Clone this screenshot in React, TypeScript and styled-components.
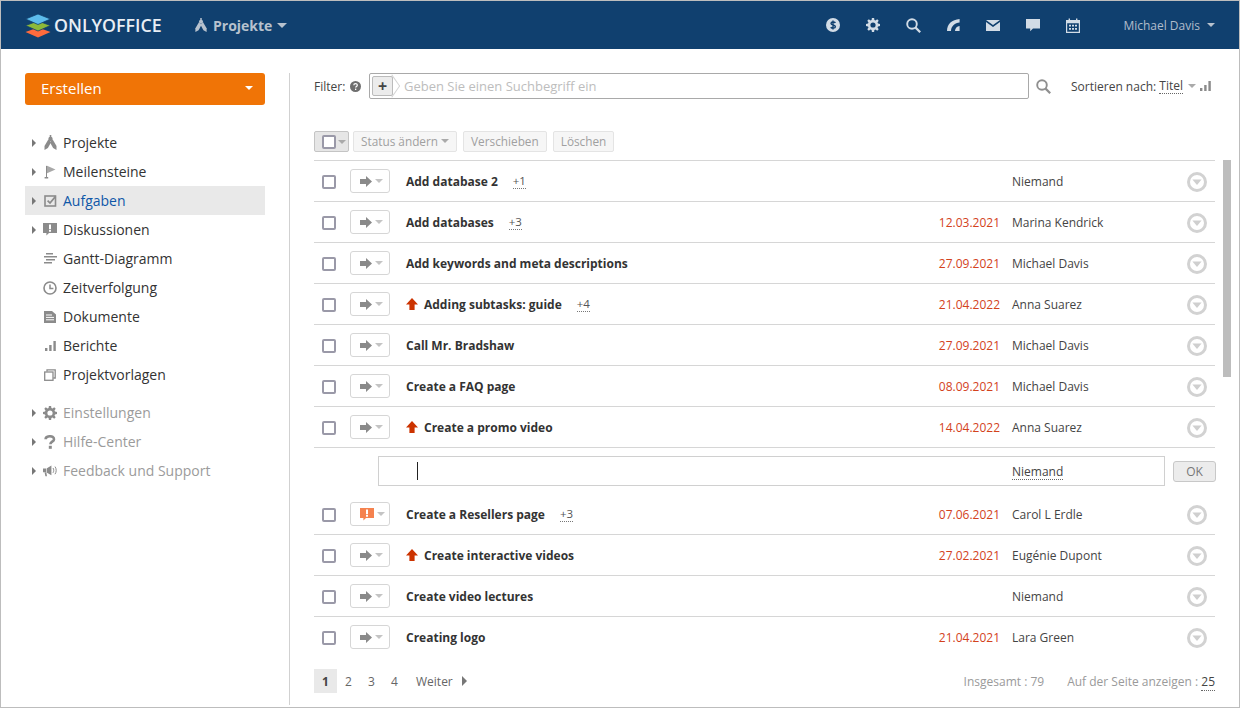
import { ReactNode } from 'react';
import styled, { createGlobalStyle } from 'styled-components';

const GlobalStyle = createGlobalStyle`
  html, body { margin: 0; padding: 0; background: #fff; }
  body { font-family: "Open Sans", "Liberation Sans", sans-serif; color: #333; }
`;

const Frame = styled.div`
  position: relative;
  box-sizing: border-box;
  width: 1240px;
  height: 708px;
  border: 1px solid #bdbdbd;
  overflow: hidden;
`;

const Header = styled.header`
  display: flex;
  align-items: center;
  height: 48px;
  padding-left: 24px;
  padding-right: 24px;
  background: #10406f;
`;

const LogoText = styled.span`
  margin-left: 3px;
  width: 138px;
  font-size: 17.8px;
  font-weight: 600;
  color: #e8eef4;
`;

const ModuleName = styled.span`
  display: flex;
  align-items: center;
  gap: 5px;
  margin-left: 2px;
  font-size: 14px;
  font-weight: 700;
  color: #b7c2ce;
`;

const HeaderIcons = styled.div`
  display: flex;
  align-items: center;
  margin-left: auto;
  gap: 24px;
`;

const HeaderIcon = styled.span`
  display: flex;
  justify-content: center;
  width: 16px;
  color: #d2dce6;
`;

const UserName = styled.span`
  display: flex;
  align-items: center;
  gap: 7px;
  margin-left: 42px;
  font-size: 12px;
  color: #b0bccb;
`;

const Caret = styled.span<{ $color?: string; $size?: number }>`
  display: inline-block;
  width: 0;
  height: 0;
  border-left: ${(p) => p.$size || 4}px solid transparent;
  border-right: ${(p) => p.$size || 4}px solid transparent;
  border-top: ${(p) => p.$size || 4}px solid ${(p) => p.$color || '#b7c2ce'};
`;

const Body = styled.div`
  display: flex;
  padding-top: 24px;
`;

const Sidebar = styled.aside`
  box-sizing: border-box;
  width: 289px;
  height: 632px;
  padding: 0 24px;
  border-right: 1px solid #d1d1d1;
`;

const CreateButton = styled.div`
  display: flex;
  align-items: center;
  justify-content: space-between;
  box-sizing: border-box;
  height: 32px;
  margin-bottom: 23px;
  padding: 0 12px 2px 16px;
  border-radius: 3px;
  background: #f07406;
  font-size: 15px;
  color: #fff;
`;

const NavList = styled.nav<{ $muted?: boolean }>`
  margin-bottom: ${(p) => (p.$muted ? 0 : 9)}px;
`;

const NavRow = styled.div<{ $active?: boolean; $muted?: boolean }>`
  display: flex;
  align-items: center;
  height: 29px;
  font-size: 14px;
  background: ${(p) => (p.$active ? '#e9e9e9' : 'transparent')};
  color: ${(p) => (p.$active ? '#0f57a8' : p.$muted ? '#9b9b9b' : '#333')};
`;

const NavArrow = styled.span<{ $hidden?: boolean }>`
  width: 0;
  height: 0;
  margin-left: 7px;
  border-top: 4px solid transparent;
  border-bottom: 4px solid transparent;
  border-left: 4px solid ${(p) => (p.$hidden ? 'transparent' : '#777')};
`;

const NavIcon = styled.span`
  display: flex;
  justify-content: center;
  width: 16px;
  margin-left: 6px;
  margin-right: 5px;
  color: #8b8b8b;
`;

const Main = styled.main`
  width: 901px;
  margin-left: 24px;
`;

const FilterBar = styled.div`
  display: flex;
  align-items: center;
  height: 26px;
  margin-bottom: 32px;
  font-size: 12px;
  color: #444;
`;

const FilterLabel = styled.span`
  display: flex;
  align-items: center;
  gap: 5px;
  flex: none;
  width: 55px;
`;

const SearchBox = styled.div`
  display: flex;
  align-items: center;
  flex: none;
  box-sizing: border-box;
  width: 660px;
  height: 26px;
  padding-left: 2px;
  border: 1px solid #a9a9a9;
  border-radius: 2px;
`;

const AddTag = styled.span`
  position: relative;
  display: block;
  width: 21px;
  height: 20px;

  &:after {
    content: '';
    position: absolute;
    top: 3px;
    right: -6px;
    width: 13px;
    height: 13px;
    border-top: 1px solid #d4d4d4;
    border-right: 1px solid #d4d4d4;
    transform: rotate(45deg) skew(10deg, 10deg);
    background: #fff;
  }
`;

const TagFace = styled.span`
  position: relative;
  z-index: 1;
  display: flex;
  align-items: center;
  justify-content: center;
  box-sizing: border-box;
  width: 21px;
  height: 20px;
  border: 1px solid #bbb;
  border-radius: 2px;
  background: #ececec;
  font-size: 16px;
  font-weight: 700;
  line-height: 1;
  color: #444;
`;

const Placeholder = styled.span`
  margin-left: 11px;
  font-size: 13px;
  color: #bdbdbd;
`;

const SearchIconWrap = styled.span`
  display: flex;
  flex: none;
  box-sizing: border-box;
  width: 42px;
  padding-left: 7px;
  color: #8f8f8f;
`;

const SortLabel = styled.span`
  display: flex;
  align-items: center;
  white-space: pre;
`;

const SortCaret = styled.span`
  display: flex;
  margin: 0 4px 0 5px;
`;

const SortBars = styled.span`
  display: flex;
  color: #8a8a8a;
`;

const Dotted = styled.span`
  border-bottom: 1px dotted #666;
  line-height: 15px;
`;

const Toolbar = styled.div`
  display: flex;
  align-items: center;
  gap: 6px;
  height: 21px;
  margin-bottom: 8px;
`;

const SelectAll = styled.span`
  display: flex;
  align-items: center;
  gap: 2px;
  box-sizing: border-box;
  width: 35px;
  height: 21px;
  margin-right: -2px;
  padding-left: 7px;
  border: 1px solid #c4c4c4;
  border-radius: 2px;
  background: #e6e6e6;
`;

const ToolButton = styled.span`
  display: flex;
  align-items: center;
  gap: 3px;
  box-sizing: border-box;
  height: 21px;
  padding: 0 7px 1px;
  border: 1px solid #e4e4e4;
  border-radius: 2px;
  background: #f6f6f6;
  font-size: 11.8px;
  color: #a0a0a0;
`;

const Check = styled.span`
  flex: none;
  box-sizing: border-box;
  display: block;
  width: 14px;
  height: 14px;
  border: 2px solid #9a99a8;
  border-radius: 2px;
  background: #fff;
`;

const RowCheck = styled(Check)`
  margin-top: 2px;
`;

const Row = styled.div<{ $noLine?: boolean; $last?: boolean }>`
  display: flex;
  align-items: center;
  height: 41px;
  padding-left: 8px;
  border-top: 1px solid ${(p) => (p.$noLine ? 'transparent' : '#d6d6d6')};
  box-sizing: border-box;
  font-size: 12px;
  ${(p) => (p.$last ? 'margin-bottom: 12px;' : '')}
`;

const StatusButton = styled.span`
  display: flex;
  align-items: center;
  gap: 3px;
  flex: none;
  box-sizing: border-box;
  width: 40px;
  height: 24px;
  margin: 0 16px 0 14px;
  padding-left: 9px;
  border: 1px solid #d6d6d6;
  border-radius: 3px;
`;

const TitleCell = styled.div`
  display: flex;
  align-items: center;
  flex: 1;
  min-width: 0;
`;

const PriorityIcon = styled.span`
  display: flex;
  width: 18px;
`;

const TaskTitle = styled.span`
  font-weight: 700;
  font-size: 12px;
  color: #333;
`;

const SubCount = styled.span`
  margin-left: 15px;
  font-size: 11.5px;
  line-height: 15px;
  color: #555;
  border-bottom: 1px dotted #777;
`;

const DueDate = styled.span`
  width: 90px;
  margin-right: 12px;
  text-align: right;
  font-size: 12px;
  color: #d3421c;
`;

const Person = styled.span`
  width: 175px;
  font-size: 12px;
  color: #444;
`;

const MenuSlot = styled.span`
  display: flex;
  width: 28px;
  margin-top: 2px;
`;

const EditRow = styled.div`
  display: flex;
  align-items: flex-start;
  box-sizing: border-box;
  height: 46px;
  padding-top: 8px;
  padding-left: 64px;
  border-top: 1px solid #d6d6d6;
`;

const EditBox = styled.div`
  display: flex;
  align-items: center;
  flex: none;
  box-sizing: border-box;
  width: 787px;
  height: 30px;
  padding-left: 38px;
  padding-top: 2px;
  border: 1px solid #d0d0d0;
  font-size: 12px;
  color: #444;
`;

const TextCursor = styled.span`
  width: 1px;
  height: 18px;
  margin-right: 594px;
  margin-top: -2px;
  background: #222;
`;

const OkButton = styled.span`
  display: flex;
  align-items: center;
  justify-content: center;
  flex: none;
  box-sizing: border-box;
  width: 43px;
  height: 21px;
  margin-top: 5px;
  margin-left: 8px;
  border: 1px solid #c8c8c8;
  border-radius: 3px;
  background: #ececec;
  font-size: 12px;
  color: #777;
`;

const Pager = styled.div`
  display: flex;
  align-items: center;
  height: 24px;
  font-size: 12px;
  color: #666;
`;

const PageNum = styled.span<{ $current?: boolean }>`
  display: flex;
  align-items: center;
  justify-content: center;
  width: 23px;
  height: 24px;
  background: ${(p) => (p.$current ? '#e9e9e9' : 'transparent')};
  font-weight: ${(p) => (p.$current ? 700 : 400)};
  color: ${(p) => (p.$current ? '#444' : '#666')};
`;

const NextLink = styled.span`
  display: flex;
  align-items: center;
  gap: 9px;
  margin-left: 10px;
`;

const NextArrow = styled.span`
  width: 0;
  height: 0;
  border-top: 5px solid transparent;
  border-bottom: 5px solid transparent;
  border-left: 5px solid #777;
`;

const PagerInfo = styled.span`
  display: flex;
  gap: 23px;
  margin-left: auto;
  color: #9a9a9a;
  white-space: pre;
`;

const PageSize = styled.span`
  color: #444;
  border-bottom: 1px dotted #666;
  line-height: 15px;
`;

const ScrollThumb = styled.div`
  position: absolute;
  top: 159px;
  left: 1222px;
  width: 8px;
  height: 217px;
  background: #bdbdbd;
`;

// --- drawings ---

const Logo = () => (
  <svg width="26" height="25" viewBox="0 0 26 24">
    <polygon points="13,14 25.5,18.5 13,24 0.5,18.5" fill="#ff6b3d" />
    <polygon points="13,7.5 25.5,12 13,17.5 0.5,12" fill="#8cb93a" stroke="#10406f" strokeWidth="0.8" />
    <polygon points="13,0.5 25.5,5.5 13,11 0.5,5.5" fill="#5cbcec" stroke="#10406f" strokeWidth="0.8" />
  </svg>
);

const CompassIcon = ({ size = 15 }: { size?: number }) => (
  <svg width={size} height={size} viewBox="0 0 14 15" fill="currentColor">
    <rect x="6.2" y="0" width="1.6" height="3" />
    <circle cx="7" cy="4" r="2.2" />
    <path d="M4.8 4.6 7.6 7.2 4.4 13 1 15 1 11z" />
    <path d="M9.2 4.6 6.4 7.2 9.6 13 13 15 13 11z" />
  </svg>
);

const FlagIcon = () => (
  <svg width="14" height="14" viewBox="0 0 14 14">
    <path d="M3.5 0.5 12.5 4.4 3.5 8.5z" fill="#a8a8a8" />
    <path d="M3 1h1v11h1.2v1.4H1.6V12H3z" fill="currentColor" />
  </svg>
);

const TaskIcon = () => (
  <svg width="13" height="13" viewBox="0 0 13 13">
    <rect x="1" y="2" width="10.5" height="10" fill="none" stroke="currentColor" strokeWidth="1.6" />
    <path d="M3.6 6.6 6 9l5.6-6.6" fill="none" stroke="currentColor" strokeWidth="1.7" />
  </svg>
);

const AlertBubble = ({ color = 'currentColor' }: { color?: string }) => (
  <svg width="14" height="13" viewBox="0 0 14 13">
    <path d="M0 0h14v10H6l-2.6 2.6V10H0z" fill={color} />
    <path d="M6 1.6h2v4.6H6zM6 7h2v1.8H6z" fill="#fff" />
  </svg>
);

const GanttIcon = () => (
  <svg width="13" height="11" viewBox="0 0 13 11" fill="currentColor">
    <path d="M2 0h7v1.6H2zM0 3h13v1.6H0zM2 6h9v1.6H2zM0 9h8v1.6H0z" />
  </svg>
);

const ClockIcon = () => (
  <svg width="14" height="14" viewBox="0 0 14 14" fill="none" stroke="currentColor">
    <circle cx="7" cy="7" r="6" strokeWidth="1.6" />
    <path d="M7 3.4V7.4H10.4" strokeWidth="1.5" />
  </svg>
);

const DocIcon = () => (
  <svg width="12" height="12" viewBox="0 0 12 12">
    <path d="M0 0h8l4 3.6V12H0z" fill="currentColor" />
    <path d="M2 4h6M2 6.4h8M2 8.8h8" stroke="#fff" strokeWidth="1" />
  </svg>
);

const BarsIcon = ({ w = 11, h = 10 }: { w?: number; h?: number }) => (
  <svg width={w} height={h} viewBox="0 0 11 10" fill="currentColor">
    <path d="M0 7h2.4v3H0zM4.2 4h2.4v6H4.2zM8.4 0h2.4v10H8.4z" />
  </svg>
);

const TemplateIcon = () => (
  <svg width="12" height="12" viewBox="0 0 12 12" fill="none" stroke="currentColor" strokeWidth="1.3">
    <rect x="0.7" y="3" width="8.3" height="8.3" />
    <path d="M3 2.6V0.8h8.2V9H9.4" />
  </svg>
);

const GearIcon = ({ size = 14 }: { size?: number }) => (
  <svg width={size} height={size} viewBox="0 0 14 14">
    <path
      fillRule="evenodd"
      fill="currentColor"
      d="M5.9 0h2.2l.3 2 1.1.5L11.2 1.3l1.5 1.5-1.2 1.7.5 1.1 2 .3v2.2l-2 .3-.5 1.1 1.2 1.7-1.5 1.5-1.7-1.2-1.1.5-.3 2H5.9l-.3-2-1.1-.5-1.7 1.2-1.5-1.5 1.2-1.7-.5-1.1-2-.3V5.9l2-.3.5-1.1-1.2-1.7 1.5-1.5 1.7 1.2 1.1-.5zM7 4.4a2.6 2.6 0 1 0 0 5.2 2.6 2.6 0 0 0 0-5.2z"
    />
  </svg>
);

const MegaphoneIcon = () => (
  <svg width="15" height="12" viewBox="0 0 15 12" fill="currentColor">
    <path d="M0 3.6h3v3.6H0zM3.6 3.4 8.4 0.6v9.6L3.6 7.4zM1.6 7.6h1.8l.6 3.6H2.4z" />
    <path d="M10 3c1 1.4 1 3.4 0 4.8M12 1.6c1.6 2.2 1.6 5.4 0 7.6" fill="none" stroke="currentColor" strokeWidth="1" />
  </svg>
);

const DollarIcon = () => (
  <svg width="14" height="14" viewBox="0 0 14 14">
    <circle cx="7" cy="7" r="7" fill="currentColor" />
    <path d="M9.4 4.8C8.8 3.8 5 3.4 5 5.4c0 2 4.4 1.2 4.4 3.3 0 2-3.8 1.6-4.7.5M7 2.4v9.2" fill="none" stroke="#10406f" strokeWidth="1.4" />
  </svg>
);

const SearchIcon = ({ size = 15 }: { size?: number }) => (
  <svg width={size} height={size} viewBox="0 0 15 15" fill="none" stroke="currentColor">
    <circle cx="6" cy="6" r="4.8" strokeWidth="1.9" />
    <path d="M9.6 9.6 14.2 14.2" strokeWidth="2.2" />
  </svg>
);

const FeedIcon = () => (
  <svg width="13" height="12" viewBox="0 0 13 12" fill="currentColor">
    <path d="M0 12C0 5 5 .6 12.6 0v3.6C8 4 4.2 7 4 12zM8 12c0-2.6 2-4.8 4.6-5v5z" />
  </svg>
);

const MailIcon = () => (
  <svg width="14" height="11" viewBox="0 0 14 11" fill="currentColor">
    <path d="M0 0h14L7 5zM0 2l7 5 7-5v9H0z" />
  </svg>
);

const ChatIcon = () => (
  <svg width="14" height="14" viewBox="0 0 14 14" fill="currentColor">
    <path d="M0 1h14v9.6H7l-2.8 2.6v-2.6H0z" />
  </svg>
);

const CalendarIcon = () => (
  <svg width="14" height="15" viewBox="0 0 14 15" fill="currentColor">
    <path fillRule="evenodd" d="M0 2h2.6V.4h1.4V2h6V.4h1.4V2H14v13H0zM1.2 5.2v8.6h11.6V5.2z" />
    <path d="M3 6.8h2v1.8H3zM6 6.8h2v1.8H6zM9 6.8h2v1.8H9zM3 10h2v1.8H3zM6 10h2v1.8H6zM9 10h2v1.8H9z" />
  </svg>
);

const HelpIcon = () => (
  <svg width="11" height="11" viewBox="0 0 11 11">
    <circle cx="5.5" cy="5.5" r="5.5" fill="#6f6f6f" />
    <path d="M3.8 4.2c0-2 3.5-2 3.5 0 0 1.2-1.7 1.2-1.7 2.4" fill="none" stroke="#fff" strokeWidth="1.2" />
    <rect x="5" y="7.6" width="1.3" height="1.4" fill="#fff" />
  </svg>
);

const QuestionIcon = () => (
  <svg width="12" height="14" viewBox="0 0 12 14">
    <path d="M1.6 4.2C1.6 0.4 10 .2 10 4.2c0 2.6-3.6 2.4-3.6 5" fill="none" stroke="currentColor" strokeWidth="2.6" />
    <rect x="4.8" y="10.8" width="3" height="3" fill="currentColor" />
  </svg>
);

const ArrowRight = () => (
  <svg width="12" height="11" viewBox="0 0 12 11" fill="#8a8a8a">
    <path d="M0 3h6V0l6 5.5L6 11V8H0z" />
  </svg>
);

const ArrowUp = () => (
  <svg width="12" height="12" viewBox="0 0 12 12" fill="#cc3300">
    <path d="M6 0l6 6.4H8.6V12H3.4V6.4H0z" />
  </svg>
);

const RowMenu = () => (
  <svg width="20" height="20" viewBox="0 0 20 20">
    <circle cx="10" cy="10" r="8.5" fill="none" stroke="#d2d2d2" strokeWidth="3" />
    <path d="M5.4 7.6h9.2L10 13z" fill="#cfcfcf" />
  </svg>
);

// --- data ---

type Task = {
  title: string;
  sub?: number;
  up?: boolean;
  alert?: boolean;
  date?: string;
  person: string;
};

const tasksBefore: Task[] = [
  { title: 'Add database 2', sub: 1, person: 'Niemand' },
  { title: 'Add databases', sub: 3, date: '12.03.2021', person: 'Marina Kendrick' },
  { title: 'Add keywords and meta descriptions', date: '27.09.2021', person: 'Michael Davis' },
  { title: 'Adding subtasks: guide', sub: 4, up: true, date: '21.04.2022', person: 'Anna Suarez' },
  { title: 'Call Mr. Bradshaw', date: '27.09.2021', person: 'Michael Davis' },
  { title: 'Create a FAQ page', date: '08.09.2021', person: 'Michael Davis' },
  { title: 'Create a promo video', up: true, date: '14.04.2022', person: 'Anna Suarez' },
];

const tasksAfter: Task[] = [
  { title: 'Create a Resellers page', sub: 3, alert: true, date: '07.06.2021', person: 'Carol L Erdle' },
  { title: 'Create interactive videos', up: true, date: '27.02.2021', person: 'Eugénie Dupont' },
  { title: 'Create video lectures', person: 'Niemand' },
  { title: 'Creating logo', date: '21.04.2021', person: 'Lara Green' },
];

const navMain: { label: string; icon: ReactNode; arrow?: boolean; active?: boolean }[] = [
  { label: 'Projekte', icon: <CompassIcon />, arrow: true },
  { label: 'Meilensteine', icon: <FlagIcon />, arrow: true },
  { label: 'Aufgaben', icon: <TaskIcon />, arrow: true, active: true },
  { label: 'Diskussionen', icon: <AlertBubble />, arrow: true },
  { label: 'Gantt-Diagramm', icon: <GanttIcon /> },
  { label: 'Zeitverfolgung', icon: <ClockIcon /> },
  { label: 'Dokumente', icon: <DocIcon /> },
  { label: 'Berichte', icon: <BarsIcon /> },
  { label: 'Projektvorlagen', icon: <TemplateIcon /> },
];

const navExtra: { label: string; icon: ReactNode }[] = [
  { label: 'Einstellungen', icon: <GearIcon /> },
  { label: 'Hilfe-Center', icon: <QuestionIcon /> },
  { label: 'Feedback und Support', icon: <MegaphoneIcon /> },
];

const TaskRow = ({ task, last, noLine }: { task: Task; last?: boolean; noLine?: boolean }) => (
  <Row $last={last} $noLine={noLine}>
    <RowCheck />
    <StatusButton>
      {task.alert ? <AlertBubble color="#f5824f" /> : <ArrowRight />}
      <Caret $color="#c4c4c4" />
    </StatusButton>
    <TitleCell>
      {task.up && (
        <PriorityIcon>
          <ArrowUp />
        </PriorityIcon>
      )}
      <TaskTitle>{task.title}</TaskTitle>
      {task.sub && <SubCount>+{task.sub}</SubCount>}
    </TitleCell>
    <DueDate>{task.date}</DueDate>
    <Person>{task.person}</Person>
    <MenuSlot>
      <RowMenu />
    </MenuSlot>
  </Row>
);

export default function App() {
  return (
    <>
      <GlobalStyle />
      <Frame>
        <Header>
          <Logo />
          <LogoText>ONLYOFFICE</LogoText>
          <ModuleName>
            <CompassIcon size={14} />
            Projekte
            <Caret $size={5} />
          </ModuleName>
          <HeaderIcons>
            <HeaderIcon><DollarIcon /></HeaderIcon>
            <HeaderIcon><GearIcon /></HeaderIcon>
            <HeaderIcon><SearchIcon /></HeaderIcon>
            <HeaderIcon><FeedIcon /></HeaderIcon>
            <HeaderIcon><MailIcon /></HeaderIcon>
            <HeaderIcon><ChatIcon /></HeaderIcon>
            <HeaderIcon><CalendarIcon /></HeaderIcon>
          </HeaderIcons>
          <UserName>
            Michael Davis
            <Caret />
          </UserName>
        </Header>
        <Body>
          <Sidebar>
            <CreateButton>
              Erstellen
              <Caret $color="#fff" />
            </CreateButton>
            <NavList>
              {navMain.map((item) => (
                <NavRow key={item.label} $active={item.active}>
                  <NavArrow $hidden={!item.arrow} />
                  <NavIcon>{item.icon}</NavIcon>
                  {item.label}
                </NavRow>
              ))}
            </NavList>
            <NavList $muted>
              {navExtra.map((item) => (
                <NavRow key={item.label} $muted>
                  <NavArrow />
                  <NavIcon>{item.icon}</NavIcon>
                  {item.label}
                </NavRow>
              ))}
            </NavList>
          </Sidebar>
          <Main>
            <FilterBar>
              <FilterLabel>
                Filter:
                <HelpIcon />
              </FilterLabel>
              <SearchBox>
                <AddTag>
                  <TagFace>+</TagFace>
                </AddTag>
                <Placeholder>Geben Sie einen Suchbegriff ein</Placeholder>
              </SearchBox>
              <SearchIconWrap>
                <SearchIcon />
              </SearchIconWrap>
              <SortLabel>
                Sortieren nach: <Dotted>Titel</Dotted>
                <SortCaret>
                  <Caret $color="#aaa" />
                </SortCaret>
                <SortBars>
                  <BarsIcon />
                </SortBars>
              </SortLabel>
            </FilterBar>
            <Toolbar>
              <SelectAll>
                <Check />
                <Caret $color="#aaa" />
              </SelectAll>
              <ToolButton>
                Status ändern
                <Caret $color="#aaa" />
              </ToolButton>
              <ToolButton>Verschieben</ToolButton>
              <ToolButton>Löschen</ToolButton>
            </Toolbar>
            {tasksBefore.map((task) => (
              <TaskRow key={task.title} task={task} />
            ))}
            <EditRow>
              <EditBox>
                <TextCursor />
                <Dotted>Niemand</Dotted>
              </EditBox>
              <OkButton>OK</OkButton>
            </EditRow>
            {tasksAfter.map((task, i) => (
              <TaskRow key={task.title} task={task} noLine={i === 0} last={i === tasksAfter.length - 1} />
            ))}
            <Pager>
              <PageNum $current>1</PageNum>
              <PageNum>2</PageNum>
              <PageNum>3</PageNum>
              <PageNum>4</PageNum>
              <NextLink>
                Weiter
                <NextArrow />
              </NextLink>
              <PagerInfo>
                <span>Insgesamt : 79</span>
                <span>
                  Auf der Seite anzeigen : <PageSize>25</PageSize>
                </span>
              </PagerInfo>
            </Pager>
          </Main>
        </Body>
        <ScrollThumb />
      </Frame>
    </>
  );
}
